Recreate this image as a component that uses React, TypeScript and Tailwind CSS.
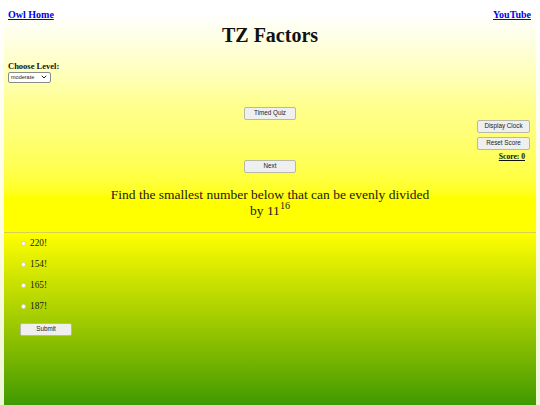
import React from "react";

const btn =
  "h-[13px] w-[52px] flex items-center justify-center bg-[#efefef] border border-[#b9b9a8] rounded-[2px] text-[6.3px] leading-none text-[#222] font-['Liberation_Sans',Arial,sans-serif]";

export default function App() {
  const options = ["220!", "154!", "165!", "187!"];
  return (
    <div className="min-h-[405px] flex flex-col bg-gradient-to-b from-white via-[#fffde2] to-[#eef6d6] font-['Liberation_Serif','Times_New_Roman',serif] text-[#111]">
      <div className="mx-[4px] px-[4px] pt-[10px] pb-[13px] bg-gradient-to-b from-white from-[6%] via-[#ffff90] via-[45%] to-[#ffff00] to-[85%]">
        <div className="flex justify-between text-[10px] leading-[10px] font-bold">
          <a href="#" className="text-[#0000ee] underline">Owl Home</a>
          <a href="#" className="text-[#0000ee] underline mr-[1px]">YouTube</a>
        </div>
        <h1 className="mt-[3px] text-center text-[20px] leading-[24px] font-bold">TZ Factors</h1>
        <div className="mt-[14px] text-[8.5px] leading-[10px] font-bold">Choose Level:</div>
        <div className="mt-[1px] w-[43px] h-[10.5px] flex items-center justify-between bg-white border border-[#8a8a8a] rounded-[2px] pl-[2px] pr-[3px]">
          <span className="text-[5.5px] leading-none font-['Liberation_Sans',Arial,sans-serif] text-[#222]">moderate</span>
          <svg width="6" height="4" viewBox="0 0 6 4" fill="none">
            <path d="M0.8 0.8 L3 3 L5.2 0.8" stroke="#222" strokeWidth="1" />
          </svg>
        </div>
        <div className="mt-[24px] grid grid-cols-[1fr_auto_1fr]">
          <div />
          <div className="flex flex-col items-center">
            <div className={btn}>Timed Quiz</div>
            <div className={btn + " mt-[40px]"}>Next</div>
          </div>
          <div className="flex flex-col items-end pr-[2px] pt-[13px]">
            <div className={btn + " w-[53px]"}>Display Clock</div>
            <div className={btn + " w-[53px] mt-[4px]"}>Reset Score</div>
            <div className="mt-[2px] mr-[5px] text-[7.6px] leading-[10px] font-bold underline">Score: 0</div>
          </div>
        </div>
        <div className="mt-[14px] text-center text-[13.5px] leading-[16px] text-[#1a1a1a]">
          <div>Find the smallest number below that can be evenly divided</div>
          <div>
            by 11<sup>16</sup>
          </div>
        </div>
      </div>
      <div className="mx-[4px] h-px bg-[#d8d14e]" />
      <div className="mx-[4px] flex-1 bg-gradient-to-b from-[#ffff00] to-[#3d9a00] pl-[17px] pt-[5px]">
        <div className="flex flex-col gap-[10px]">
          {options.map((o) => (
            <label key={o} className="flex items-center gap-[4px] h-[11px]">
              <span className="w-[5px] h-[5px] rounded-full bg-white border border-[#d0d0c0]" />
              <span className="text-[9.3px] leading-[11px] text-[#1a1a1a]">{o}</span>
            </label>
          ))}
        </div>
        <div className={btn + " mt-[11px] ml-[-1px] h-[12px]"}>Submit</div>
      </div>
    </div>
  );
}
